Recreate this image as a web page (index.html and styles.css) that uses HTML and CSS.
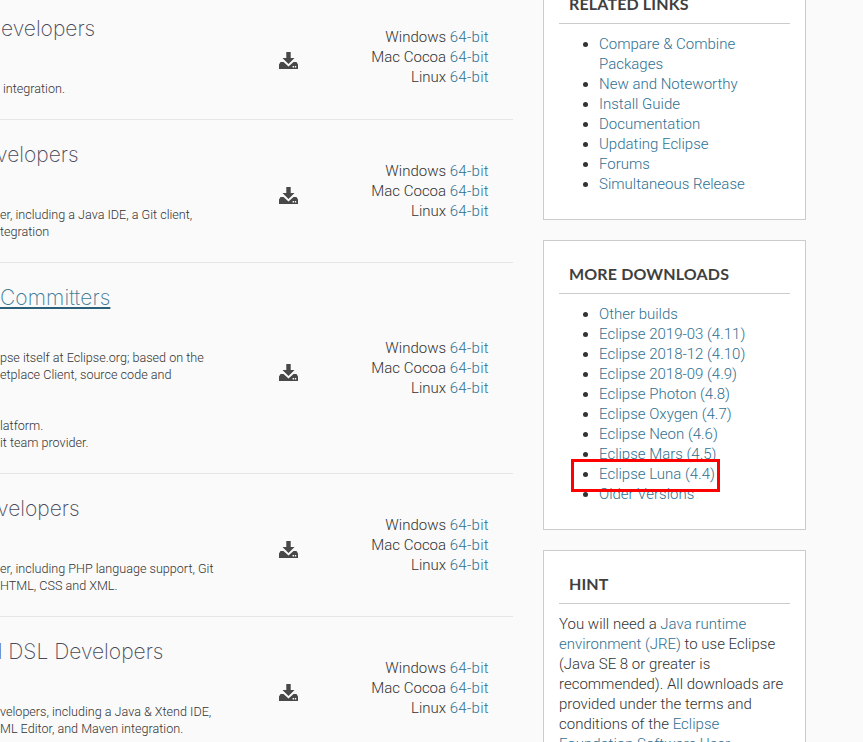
FILE: index.html
```html
<!DOCTYPE html>
<html lang="en">
<head>
<meta charset="utf-8">
<title>Eclipse Downloads</title>
<link rel="stylesheet" href="styles.css">
</head>
<body>
<svg class="defs" width="0" height="0" aria-hidden="true"><defs><symbol id="dl" viewBox="0 0 19 17"><path d="M7.300 0h4.400v6h3.800L9.500 12 3.500 6h3.800z"/><path fill-rule="evenodd" d="M0 12.500 1.500 10H4.500L9.500 14.500 14.500 10H17.500L19 12.500V17H0zM13.600 14h1.400v1.400h-1.400zM15.800 14h1.400v1.400h-1.400z"/></symbol></defs></svg>
<div class="page">
<main class="main">
  <section class="row">
    <div class="info">
      <h2 class="title t1">evelopers</h2>
      <p class="desc"><span class="l1">integration.</span></p>
    </div>
    <svg class="icon"><use href="#dl"/></svg>
    <div class="links"><div>Windows <a>64-bit</a></div><div>Mac Cocoa <a>64-bit</a></div><div>Linux <a>64-bit</a></div></div>
  </section>
  <section class="row">
    <div class="info">
      <h2 class="title t2">velopers</h2>
      <p class="desc">er, including a Java IDE, a Git client,<br>tegration</p>
    </div>
    <svg class="icon"><use href="#dl"/></svg>
    <div class="links"><div>Windows <a>64-bit</a></div><div>Mac Cocoa <a>64-bit</a></div><div>Linux <a>64-bit</a></div></div>
  </section>
  <section class="row">
    <div class="info">
      <h2 class="title"><a class="hover">Committers</a></h2>
      <p class="desc">pse itself at Eclipse.org; based on the<br>etplace Client, source code and<br>&nbsp;<br>&nbsp;<br>latform.<br>it team provider.</p>
    </div>
    <svg class="icon"><use href="#dl"/></svg>
    <div class="links"><div>Windows <a>64-bit</a></div><div>Mac Cocoa <a>64-bit</a></div><div>Linux <a>64-bit</a></div></div>
  </section>
  <section class="row">
    <div class="info">
      <h2 class="title t4">velopers</h2>
      <p class="desc">er, including PHP language support, Git<br>HTML, CSS and XML.</p>
    </div>
    <svg class="icon"><use href="#dl"/></svg>
    <div class="links"><div>Windows <a>64-bit</a></div><div>Mac Cocoa <a>64-bit</a></div><div>Linux <a>64-bit</a></div></div>
  </section>
  <section class="row">
    <div class="info">
      <h2 class="title t5">d DSL Developers</h2>
      <p class="desc">velopers, including a Java &amp; Xtend IDE,<br>ML Editor, and Maven integration.</p>
    </div>
    <svg class="icon"><use href="#dl"/></svg>
    <div class="links"><div>Windows <a>64-bit</a></div><div>Mac Cocoa <a>64-bit</a></div><div>Linux <a>64-bit</a></div></div>
  </section>
</main>
<aside class="side">
  <div class="card">
    <h3>RELATED LINKS</h3>
    <ul>
      <li><a>Compare &amp; Combine Packages</a></li>
      <li><a>New and Noteworthy</a></li>
      <li><a>Install Guide</a></li>
      <li><a>Documentation</a></li>
      <li><a>Updating Eclipse</a></li>
      <li><a>Forums</a></li>
      <li><a>Simultaneous Release</a></li>
    </ul>
  </div>
  <div class="card">
    <h3>MORE DOWNLOADS</h3>
    <ul>
      <li><a>Other builds</a></li>
      <li><a>Eclipse 2019-03 (4.11)</a></li>
      <li><a>Eclipse 2018-12 (4.10)</a></li>
      <li><a>Eclipse 2018-09 (4.9)</a></li>
      <li><a>Eclipse Photon (4.8)</a></li>
      <li><a>Eclipse Oxygen (4.7)</a></li>
      <li><a>Eclipse Neon (4.6)</a></li>
      <li><a>Eclipse Mars (4.5)</a></li>
      <li class="marked"><a>Eclipse Luna (4.4)</a></li>
      <li><a>Older Versions</a></li>
    </ul>
  </div>
  <div class="card">
    <h3>HINT</h3>
    <p class="hint">You will need a <a>Java runtime environment (JRE)</a> to use Eclipse (Java SE 8 or greater is recommended). All downloads are provided under the terms and conditions of the <a>Eclipse Foundation Software User Agreement</a> unless otherwise specified.</p>
  </div>
</aside>
</div>
</body>
</html>
```
FILE: styles.css
```css
html, body { margin: 0; height: 742px; overflow: hidden; background: #fafafa; }
body { font-family: Roboto, "Liberation Sans", Arial, sans-serif; font-weight: 300; color: #333; font-size: 15px; }
.defs { display: block; height: 0; }
.page { display: flex; align-items: flex-start; margin-top: -6px; }
a { color: #2f7091; }
.main { width: 513px; flex: none; overflow: hidden; }
.row { display: flex; align-items: center; border-bottom: 1px solid #e6e6e6; }
.info { width: 279px; flex: none; align-self: flex-start; padding: 20px 0 22px; white-space: nowrap; overflow: hidden; }
.title { margin: 0; height: 30px; font: 200 21px/30px "Inter", "Liberation Sans", sans-serif; color: #4a4a5a; }
.t1 { padding-left: 1px; }
.t2 { margin-left: -4px; }
.t4 { margin-left: -3px; }
.t5 { margin-left: -10px; }
.hover { color: #3f7b96; letter-spacing: .1px; text-decoration: underline 2px #2c6079; text-underline-offset: 2px; }
.desc { margin: 36px 0 0; font-size: 12.6px; line-height: 17px; font-weight: 300; }
.l1 { padding-left: 3px; }
.icon { width: 19px; height: 17px; fill: #484848; flex: none; margin-top: 8px; }
.links { width: 191px; flex: none; text-align: right; line-height: 20px; }
.links a { letter-spacing: .3px; }
.side { width: 263px; flex: none; margin: -24px 0 0 30px; display: flex; flex-direction: column; gap: 20px; }
.card { background: #fff; border: 1px solid #ccc; padding: 0 15px 25px; }
h3 { margin: 0; padding: 22px 0 8px 10px; font: 700 16px/22px "Lato", sans-serif; letter-spacing: .15px; color: #3f3f3f; border-bottom: 1px solid #ccc; }
ul { margin: 10px 0 0; padding: 0 0 0 40px; line-height: 20px; }
.marked { position: relative; }
.marked::after { content: ""; position: absolute; left: -28px; top: -5px; width: 143px; height: 27px; border: 3px solid #f00; }
.hint { margin: 10px 0 0; line-height: 20px; }
```
